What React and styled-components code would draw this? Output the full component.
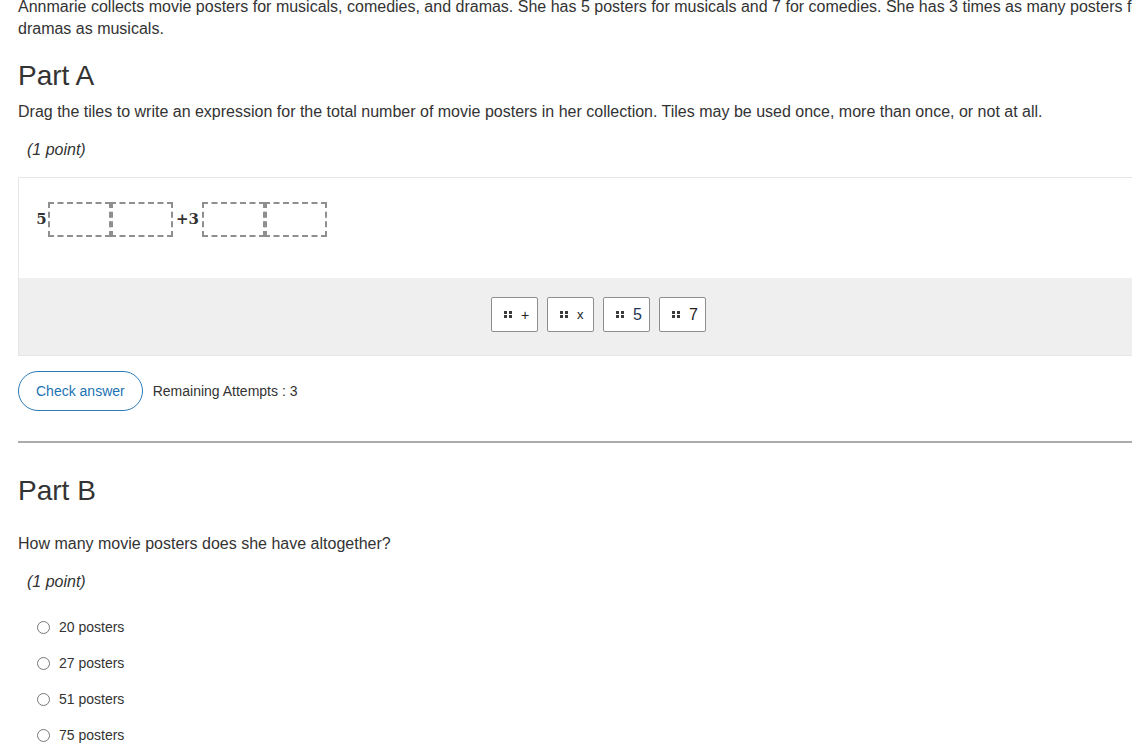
import styled, { createGlobalStyle } from "styled-components";

const GlobalStyle = createGlobalStyle`
  body {
    margin: 0;
    overflow: hidden;
    background: #fff;
    font-family: "Liberation Sans", Arial, sans-serif;
    color: #333;
  }
`;

const Page = styled.div`
  width: 1160px;
  margin: -4px 0 0 18px;
`;

const Prompt = styled.p`
  margin: 0;
  font-size: 16px;
  line-height: 22px;
`;

const PartTitle = styled.h2`
  margin: ${(p) => p.$top}px 0 0;
  font-size: 28px;
  font-weight: normal;
  line-height: 34px;
`;

const Instruction = styled.p`
  margin: ${(p) => p.$top}px 0 0;
  font-size: 16px;
  line-height: 22px;
`;

const Points = styled.div`
  margin-top: 16px;
  padding-left: 9px;
  font-size: 16px;
  line-height: 22px;
  font-style: italic;
`;

const Panel = styled.div`
  margin-top: 16px;
  border: 1px solid #e6e6e6;
  border-right: none;
`;

const Expression = styled.div`
  height: 100px;
  box-sizing: border-box;
  padding: 24px 0 0 16px;
  display: flex;
  align-items: flex-start;
  background: #fff;
`;

const MathText = styled.span`
  font-family: "DejaVu Serif", "Liberation Serif", serif;
  font-size: 15px;
  font-weight: bold;
  color: #333;
  line-height: 34px;
  width: ${(p) => p.$width}px;
  text-align: center;
`;

const Slot = styled.div`
  width: 63px;
  height: 35px;
  box-sizing: border-box;
  border: 2px dashed #8f8f8f;
  & + & {
    border-left-width: 3px;
    margin-left: -1px;
  }
`;

const Tray = styled.div`
  height: 77px;
  box-sizing: border-box;
  background: #efefef;
  display: flex;
  justify-content: center;
  align-items: center;
  gap: 9px;
  padding: 0 0 4px 0;
`;

const Tile = styled.div`
  width: 47px;
  height: 35px;
  box-sizing: border-box;
  border: 1px solid #8e8e8e;
  border-radius: 2px;
  background: #fff;
  display: flex;
  align-items: center;
  padding-left: 12px;
  gap: 9px;
`;

const Grip = styled.span`
  display: grid;
  grid-template-columns: 3px 3px;
  gap: 1px 2px;
  span {
    width: 3px;
    height: 3px;
    background: #3a3a3a;
  }
`;

const TileText = styled.span`
  font-size: ${(p) => p.$size}px;
  color: ${(p) => p.$color || "#222"};
  line-height: 1;
`;

const Actions = styled.div`
  margin-top: 15px;
  display: flex;
  align-items: center;
  gap: 10px;
`;

const CheckButton = styled.button`
  height: 40px;
  padding: 0 17px;
  border: 1px solid #2c7bb6;
  border-radius: 20px;
  background: #fff;
  color: #1c72b2;
  font-family: inherit;
  font-size: 14px;
`;

const Attempts = styled.span`
  font-size: 14px;
  color: #333;
`;

const Rule = styled.hr`
  margin: 30px 0 0;
  border: none;
  height: 2px;
  background: #acacac;
`;

const Options = styled.div`
  margin-top: 16px;
  padding-left: 19px;
`;

const Option = styled.label`
  display: flex;
  align-items: center;
  height: 36px;
  gap: 9px;
  font-size: 14px;
  color: #333;
`;

const Radio = styled.span`
  width: 13px;
  height: 13px;
  box-sizing: border-box;
  border: 1px solid #767676;
  border-radius: 50%;
`;

const tiles = [
  { label: "+", size: 14 },
  { label: "x", size: 13 },
  { label: "5", size: 16, color: "#1d3557" },
  { label: "7", size: 16 },
];

const answers = ["20 posters", "27 posters", "51 posters", "75 posters"];

function App() {
  return (
    <>
      <GlobalStyle />
      <Page>
        <Prompt>
          Annmarie collects movie posters for musicals, comedies, and dramas.
          She has 5 posters for musicals and 7 for comedies. She has 3 times as
          many posters for dramas as musicals.
        </Prompt>

        <PartTitle $top={19}>Part A</PartTitle>
        <Instruction $top={8}>
          Drag the tiles to write an expression for the total number of movie
          posters in her collection. Tiles may be used once, more than once, or
          not at all.
        </Instruction>
        <Points>(1 point)</Points>

        <Panel>
          <Expression>
            <MathText $width={13}>5</MathText>
            <Slot />
            <Slot />
            <MathText $width={29}>+3</MathText>
            <Slot />
            <Slot />
          </Expression>
          <Tray>
            {tiles.map((t) => (
              <Tile key={t.label}>
                <Grip>
                  <span />
                  <span />
                  <span />
                  <span />
                </Grip>
                <TileText $size={t.size} $color={t.color}>
                  {t.label}
                </TileText>
              </Tile>
            ))}
          </Tray>
        </Panel>

        <Actions>
          <CheckButton>Check answer</CheckButton>
          <Attempts>Remaining Attempts : 3</Attempts>
        </Actions>

        <Rule />

        <PartTitle $top={31}>Part B</PartTitle>
        <Instruction $top={25}>
          How many movie posters does she have altogether?
        </Instruction>
        <Points>(1 point)</Points>

        <Options>
          {answers.map((a) => (
            <Option key={a}>
              <Radio />
              {a}
            </Option>
          ))}
        </Options>
      </Page>
    </>
  );
}

export default App;
